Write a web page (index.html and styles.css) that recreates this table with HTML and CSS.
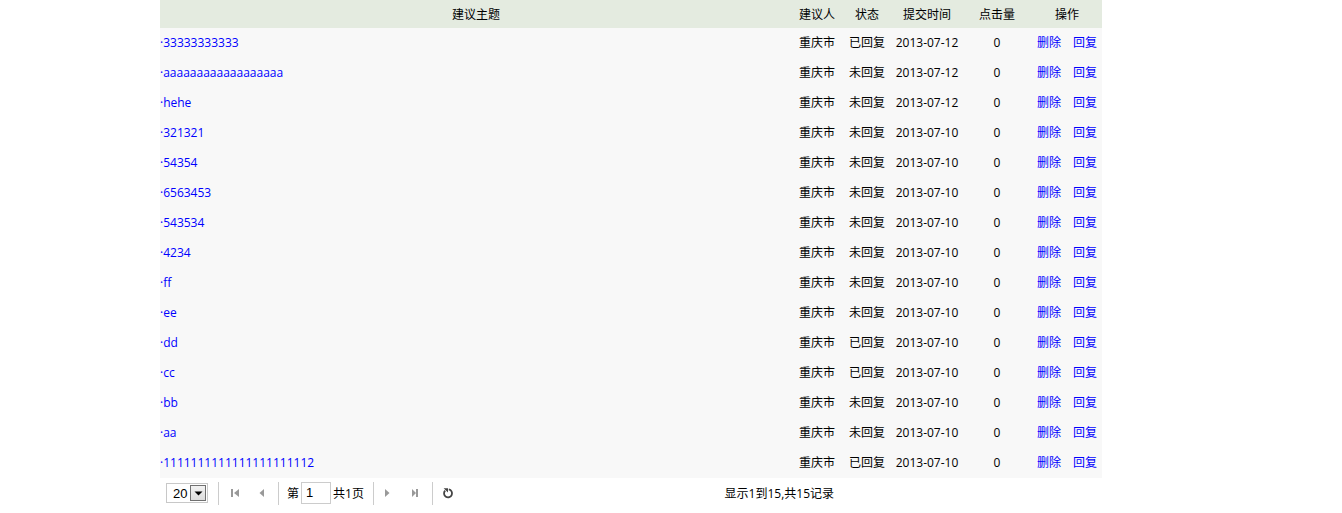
FILE: index.html
```html
<!DOCTYPE html>
<html lang="zh-CN">
<head>
<meta charset="utf-8">
<title>建议列表</title>
<link rel="stylesheet" href="styles.css">
</head>
<body>
<div class="grid">
  <table class="datagrid">
    <colgroup>
      <col class="c-title"><col class="c-user"><col class="c-state"><col class="c-time"><col class="c-hits"><col class="c-ops">
    </colgroup>
    <thead>
      <tr><th>建议主题</th><th>建议人</th><th>状态</th><th>提交时间</th><th>点击量</th><th>操作</th></tr>
    </thead>
    <tbody>
      <tr><td class="title"><a href="#">·33333333333</a></td><td>重庆市</td><td>已回复</td><td>2013-07-12</td><td>0</td><td class="ops"><a href="#">删除</a><a href="#">回复</a></td></tr>
      <tr><td class="title"><a href="#">·aaaaaaaaaaaaaaaaaa</a></td><td>重庆市</td><td>未回复</td><td>2013-07-12</td><td>0</td><td class="ops"><a href="#">删除</a><a href="#">回复</a></td></tr>
      <tr><td class="title"><a href="#">·hehe</a></td><td>重庆市</td><td>未回复</td><td>2013-07-12</td><td>0</td><td class="ops"><a href="#">删除</a><a href="#">回复</a></td></tr>
      <tr><td class="title"><a href="#">·321321</a></td><td>重庆市</td><td>未回复</td><td>2013-07-10</td><td>0</td><td class="ops"><a href="#">删除</a><a href="#">回复</a></td></tr>
      <tr><td class="title"><a href="#">·54354</a></td><td>重庆市</td><td>未回复</td><td>2013-07-10</td><td>0</td><td class="ops"><a href="#">删除</a><a href="#">回复</a></td></tr>
      <tr><td class="title"><a href="#">·6563453</a></td><td>重庆市</td><td>未回复</td><td>2013-07-10</td><td>0</td><td class="ops"><a href="#">删除</a><a href="#">回复</a></td></tr>
      <tr><td class="title"><a href="#">·543534</a></td><td>重庆市</td><td>未回复</td><td>2013-07-10</td><td>0</td><td class="ops"><a href="#">删除</a><a href="#">回复</a></td></tr>
      <tr><td class="title"><a href="#">·4234</a></td><td>重庆市</td><td>未回复</td><td>2013-07-10</td><td>0</td><td class="ops"><a href="#">删除</a><a href="#">回复</a></td></tr>
      <tr><td class="title"><a href="#">·ff</a></td><td>重庆市</td><td>未回复</td><td>2013-07-10</td><td>0</td><td class="ops"><a href="#">删除</a><a href="#">回复</a></td></tr>
      <tr><td class="title"><a href="#">·ee</a></td><td>重庆市</td><td>未回复</td><td>2013-07-10</td><td>0</td><td class="ops"><a href="#">删除</a><a href="#">回复</a></td></tr>
      <tr><td class="title"><a href="#">·dd</a></td><td>重庆市</td><td>已回复</td><td>2013-07-10</td><td>0</td><td class="ops"><a href="#">删除</a><a href="#">回复</a></td></tr>
      <tr><td class="title"><a href="#">·cc</a></td><td>重庆市</td><td>已回复</td><td>2013-07-10</td><td>0</td><td class="ops"><a href="#">删除</a><a href="#">回复</a></td></tr>
      <tr><td class="title"><a href="#">·bb</a></td><td>重庆市</td><td>未回复</td><td>2013-07-10</td><td>0</td><td class="ops"><a href="#">删除</a><a href="#">回复</a></td></tr>
      <tr><td class="title"><a href="#">·aa</a></td><td>重庆市</td><td>未回复</td><td>2013-07-10</td><td>0</td><td class="ops"><a href="#">删除</a><a href="#">回复</a></td></tr>
      <tr><td class="title"><a href="#">·1111111111111111111112</a></td><td>重庆市</td><td>已回复</td><td>2013-07-10</td><td>0</td><td class="ops"><a href="#">删除</a><a href="#">回复</a></td></tr>
    </tbody>
  </table>
  <div class="pager">
    <div class="size-select">
      <span class="size-value">20</span>
      <span class="size-btn"><svg width="9" height="5" viewBox="0 0 9 5"><path d="M0.5 0.5h8L4.5 4.5z" fill="#000"/></svg></span>
    </div>
    <span class="sep sep-a"></span>
    <span class="pbtn"><svg width="10" height="10" viewBox="0 0 10 10"><rect x="1" y="1" width="2" height="8" fill="#999"/><path d="M9 1v8L4 5z" fill="#999"/></svg></span>
    <span class="pbtn"><svg width="10" height="10" viewBox="0 0 10 10"><path d="M7 1v8L2.5 5z" fill="#999"/></svg></span>
    <span class="sep sep-b"></span>
    <span class="plabel">第</span>
    <span class="page-input">1</span>
    <span class="plabel">共1页</span>
    <span class="sep sep-c"></span>
    <span class="pbtn"><svg width="10" height="10" viewBox="0 0 10 10"><path d="M3 1v8L7.5 5z" fill="#999"/></svg></span>
    <span class="pbtn"><svg width="10" height="10" viewBox="0 0 10 10"><path d="M3 1v8L7 5z" fill="#999"/><rect x="7" y="1" width="2" height="8" fill="#999"/></svg></span>
    <span class="sep sep-d"></span>
    <span class="pbtn"><svg width="12" height="12" viewBox="0 0 12 12"><path d="M6.8 2.4A4 4 0 1 1 3.1 3.6" fill="none" stroke="#444" stroke-width="1.8"/><path d="M1.6 1.2h4.4v4.2z" fill="#444"/></svg></span>
    <span class="info">显示1到15,共15记录</span>
  </div>
</div>
</body>
</html>
```
FILE: styles.css
```css
html, body {
  margin: 0;
  padding: 0;
  background: #fff;
}
body {
  font-family: "Open Sans", "Noto Sans CJK SC", sans-serif;
  font-size: 12px;
  color: #000;
}
.grid {
  margin-left: 160px;
  width: 942px;
}
.datagrid {
  width: 942px;
  border-collapse: collapse;
  table-layout: fixed;
}
.c-title { width: 632px; }
.c-user { width: 50px; }
.c-state { width: 50px; }
.c-time { width: 70px; }
.c-hits { width: 70px; }
.c-ops { width: 70px; }
.datagrid th {
  height: 28px;
  padding: 0;
  background: #e4ebe0;
  font-weight: normal;
  text-align: center;
  vertical-align: middle;
  white-space: nowrap;
}
.datagrid td {
  height: 30px;
  padding: 0;
  background: #f8f8f8;
  text-align: center;
  vertical-align: middle;
  white-space: nowrap;
}
.datagrid td > * ,
.datagrid td {
  line-height: 28px;
}
.datagrid td.title {
  text-align: left;
}
.datagrid a {
  color: #0000ff;
  text-decoration: none;
}
.ops a + a {
  margin-left: 12px;
}
.pager {
  display: flex;
  align-items: center;
  height: 30px;
  padding-left: 6px;
}
.size-select {
  display: flex;
  align-items: center;
  justify-content: space-between;
  box-sizing: border-box;
  width: 42px;
  height: 20px;
  border: 1px solid #c8c8c8;
  padding: 0 1px 0 6px;
  font-size: 13px;
}
.size-value {
  font-family: "Liberation Sans", sans-serif;
}
.size-btn {
  display: flex;
  align-items: center;
  justify-content: center;
  box-sizing: border-box;
  width: 16px;
  height: 16px;
  border: 1px solid #707070;
  background: linear-gradient(#f2f2f2, #dcdcdc);
}
.sep {
  width: 1px;
  height: 23px;
  background: #ccc;
}
.sep-a { margin: 0 3px 0 10px; }
.sep-b { margin: 0 0 0 3px; }
.sep-c { margin: 0 0 0 7px; }
.sep-d { margin: 0 2px 0 5px; }
.pbtn {
  display: flex;
  align-items: center;
  justify-content: center;
  width: 26px;
  height: 24px;
}
.pbtn + .pbtn {
  margin-left: 1px;
}
.plabel {
  margin: 0 2px;
}
.sep + .plabel {
  margin-left: 8px;
}
.page-input {
  box-sizing: border-box;
  width: 30px;
  height: 22px;
  border: 1px solid #ccc;
  background: #fff;
  padding-left: 4px;
  line-height: 20px;
  font-size: 13px;
  font-family: "Liberation Sans", sans-serif;
}
.info {
  margin-left: auto;
  margin-right: 268px;
}
```
